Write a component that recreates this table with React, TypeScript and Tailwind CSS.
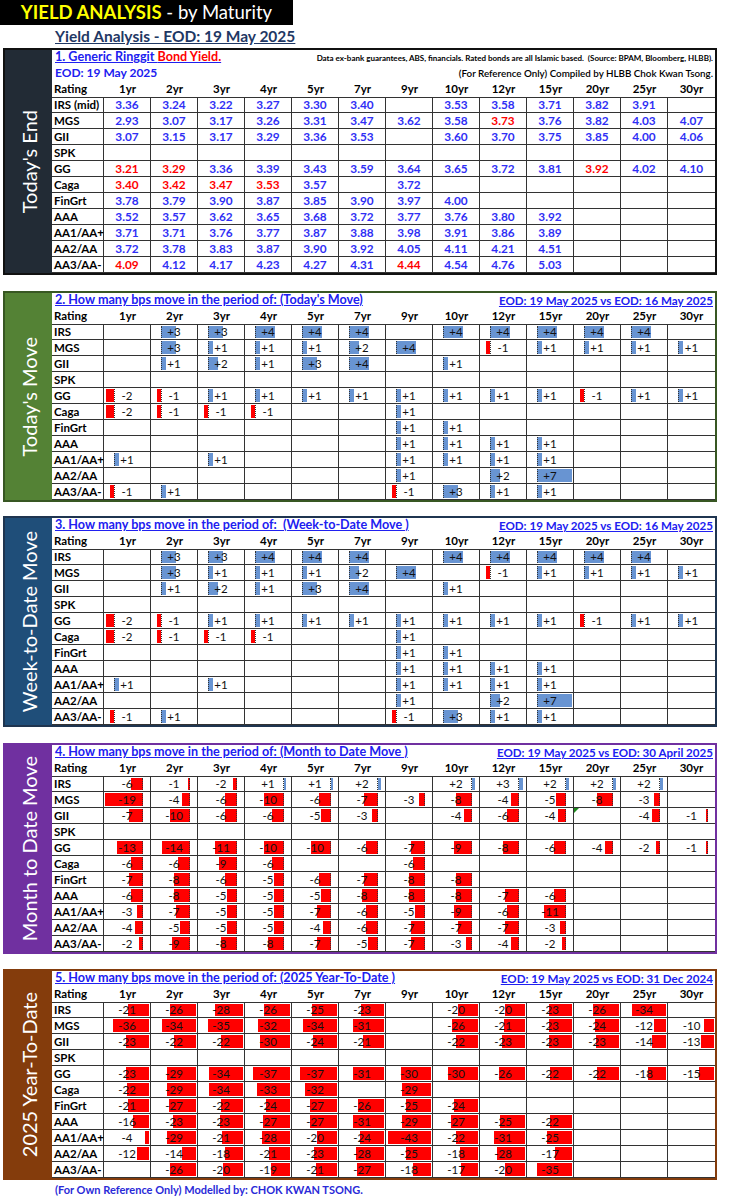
import React from "react";

type Cell = number | null;

const cols = ["1yr", "2yr", "3yr", "4yr", "5yr", "7yr", "9yr", "10yr", "12yr", "15yr", "20yr", "25yr", "30yr"];
const ratings = ["IRS", "MGS", "GII", "SPK", "GG", "Caga", "FinGrt", "AAA", "AA1/AA+", "AA2/AA", "AA3/AA-"];

// "!" in front = red figure
const yields: (string | null)[][] = [
  ["3.36", "3.24", "3.22", "3.27", "3.30", "3.40", null, "3.53", "3.58", "3.71", "3.82", "3.91", null],
  ["2.93", "3.07", "3.17", "3.26", "3.31", "3.47", "3.62", "3.58", "!3.73", "3.76", "3.82", "4.03", "4.07"],
  ["3.07", "3.15", "3.17", "3.29", "3.36", "3.53", null, "3.60", "3.70", "3.75", "3.85", "4.00", "4.06"],
  [],
  ["!3.21", "!3.29", "3.36", "3.39", "3.43", "3.59", "3.64", "3.65", "3.72", "3.81", "!3.92", "4.02", "4.10"],
  ["!3.40", "!3.42", "!3.47", "!3.53", "3.57", null, "3.72"],
  ["3.78", "3.79", "3.90", "3.87", "3.85", "3.90", "3.97", "4.00"],
  ["3.52", "3.57", "3.62", "3.65", "3.68", "3.72", "3.77", "3.76", "3.80", "3.92"],
  ["3.71", "3.71", "3.76", "3.77", "3.87", "3.88", "3.98", "3.91", "3.86", "3.89"],
  ["3.72", "3.78", "3.83", "3.87", "3.90", "3.92", "4.05", "4.11", "4.21", "4.51"],
  ["!4.09", "4.12", "4.17", "4.23", "4.27", "4.31", "!4.44", "4.54", "4.76", "5.03"],
];

const today: Cell[][] = [
  [null, 3, 3, 4, 4, 4, null, 4, 4, 4, 4, 4, null],
  [null, 3, 1, 1, 1, 2, 4, null, -1, 1, 1, 1, 1],
  [null, 1, 2, 1, 3, 4, null, 1],
  [],
  [-2, -1, 1, 1, 1, 1, 1, 1, 1, 1, -1, 1, 1],
  [-2, -1, -1, -1, null, null, 1],
  [null, null, null, null, null, null, 1, 1],
  [null, null, null, null, null, null, 1, 1, 1, 1],
  [1, null, 1, null, null, null, 1, 1, 1, 1],
  [null, null, null, null, null, null, 1, null, 2, 7],
  [-1, 1, null, null, null, null, -1, 3, 1, 1],
];

const mtd: Cell[][] = [
  [-6, -1, -2, 1, 1, 2, null, 2, 3, 2, 2, 2, null],
  [-19, -4, -6, -10, -6, -7, -3, -8, -4, -5, -8, -3, null],
  [-7, -10, -6, -6, -5, -3, null, -4, -6, -4, null, -4, -1],
  [],
  [-13, -14, -11, -10, -10, -6, -7, -9, -8, -6, -4, -2, -1],
  [-6, -6, -9, -6, null, null, -6],
  [-7, -8, -6, -5, -6, -7, -8, -8],
  [-6, -8, -5, -5, -5, -8, -8, -8, -7, -6],
  [-3, -7, -5, -5, -7, -6, -5, -9, -6, -11],
  [-4, -5, -5, -5, -4, -6, -7, -7, -7, -3],
  [-2, -9, -8, -8, -7, -5, -7, -3, -4, -2],
];

const ytd: Cell[][] = [
  [-21, -26, -28, -26, -25, -23, null, -20, -20, -23, -26, -34, null],
  [-36, -34, -35, -32, -34, -31, null, -26, -21, -23, -24, -12, -10],
  [-23, -22, -22, -30, -24, -21, null, -22, -23, -23, -23, -14, -13],
  [],
  [-23, -29, -34, -37, -37, -31, -30, -30, -26, -22, -22, -18, -15],
  [-22, -29, -34, -33, -32, null, -29],
  [-21, -27, -22, -24, -27, -26, -25, -24],
  [-16, -23, -23, -27, -27, -31, -29, -27, -25, -22],
  [-4, -29, -21, -28, -20, -24, -43, -22, -31, -25],
  [-12, -14, -18, -21, -23, -28, -25, -18, -28, -17],
  [null, -26, -20, -19, -21, -27, -18, -17, -20, -35],
];

type Kind = "today" | "mtd" | "ytd";

const fmt = (v: number) => (v > 0 ? `+${v}` : `${v}`);

function MoveBar({ v, kind }: { v: number; kind: Kind }) {
  if (kind === "today") {
    return (
      <>
        {v < 0 ? (
          <div className="absolute top-[1px] bottom-[1px] bg-[#ff0000]" style={{ left: 10 - Math.min(-v * 4, 9), width: Math.min(-v * 4, 9) }} />
        ) : (
          <div className="absolute top-[1px] bottom-[1px] left-[10px] bg-[#6894d2]" style={{ width: Math.min(v * 5, 36) }} />
        )}
        <div className="absolute top-[1px] bottom-[1px] left-[10px] border-l border-dotted border-[#333]" />
      </>
    );
  }
  if (kind === "mtd") {
    return (
      <>
        {v < 0 ? (
          <div className="absolute top-[1px] bottom-[1px] right-[7px] bg-[#ff0000]" style={{ width: Math.min(-v * 2, 38) }} />
        ) : (
          <div className="absolute top-[1px] bottom-[1px] bg-[#6894d2]" style={{ right: 7 - Math.min(v + 1, 5), width: Math.min(v + 1, 5) }} />
        )}
        <div className="absolute top-[1px] bottom-[1px] right-[7px] border-r border-dotted border-[#333]" />
      </>
    );
  }
  return <div className="absolute top-[1px] bottom-[1px] right-[1px] bg-[#ff0000]" style={{ width: Math.min(-v, 44) }} />;
}

function GridRow({ label, children, first }: { label: string; children: React.ReactNode; first?: boolean }) {
  return (
    <div className={`flex h-[16px] border-b border-[#333] ${first ? "border-t" : ""}`}>
      <div className="flex w-[52px] shrink-0 items-center border-r border-[#333] pl-[2px] text-[11.5px] font-bold text-black">
        {label}
      </div>
      {children}
    </div>
  );
}

function ColCell({ i, children }: { i: number; children?: React.ReactNode }) {
  return (
    <div className={`relative flex w-[47px] shrink-0 items-center justify-center ${i < 12 ? "border-r border-[#333]" : ""}`}>
      {children}
    </div>
  );
}

function HeaderRow() {
  return (
    <div className="flex h-[16px] items-center text-[11.5px] font-bold text-black">
      <div className="w-[52px] shrink-0 pl-[2px]">Rating</div>
      {cols.map((c) => (
        <div key={c} className="w-[47px] shrink-0 text-center">
          {c}
        </div>
      ))}
    </div>
  );
}

function Section({
  side,
  sideBg,
  border,
  children,
}: {
  side: string;
  sideBg: string;
  border: string;
  children: React.ReactNode;
}) {
  return (
    <div className={`ml-[3px] flex w-[714px] border-2 ${border}`}>
      <div className={`flex w-[47px] shrink-0 items-center justify-center ${sideBg}`}>
        <span className="rotate-180 text-[20px] leading-none whitespace-nowrap text-white [writing-mode:vertical-rl]">{side}</span>
      </div>
      <div className="flex-1">{children}</div>
    </div>
  );
}

function MoveSection({
  side,
  sideBg,
  border,
  title,
  right,
  data,
  kind,
}: {
  side: string;
  sideBg: string;
  border: string;
  title: string;
  right: string;
  data: Cell[][];
  kind: Kind;
}) {
  return (
    <Section side={side} sideBg={sideBg} border={border}>
      <div className="flex h-[15px] items-center justify-between pr-[2px] pl-[3px] font-bold text-[#2020f0] underline">
        <span className="text-[12.6px] whitespace-pre">{title}</span>
        <span className="text-[11.6px]">{right}</span>
      </div>
      <HeaderRow />
      {ratings.map((r, ri) => (
        <GridRow key={r} label={r} first={ri === 0}>
          {cols.map((c, ci) => {
            const v = data[ri][ci];
            return (
              <ColCell key={c} i={ci}>
                {v != null && <MoveBar v={v} kind={kind} />}
                {v != null && <span className="relative text-[11.5px] text-[#111]">{fmt(v)}</span>}
                {kind === "mtd" && ri === 2 && ci === 10 && (
                  <div className="absolute top-0 left-0 h-0 w-0 border-t-[5px] border-r-[5px] border-t-[#1d8a1d] border-r-transparent" />
                )}
              </ColCell>
            );
          })}
        </GridRow>
      ))}
    </Section>
  );
}

export default function App() {
  return (
    <div className="min-h-[1200px] w-[736px] bg-white font-['Lato','Noto_Sans',sans-serif]">
      <div className="flex h-[25px] w-[293px] items-center justify-center bg-black text-[18.5px] leading-none">
        <span className="font-bold text-[#ffff00]">YIELD ANALYSIS</span>
        <span className="text-white">&nbsp;- by Maturity</span>
      </div>
      <div className="flex h-[23px] items-center pl-[55px] text-[15.5px] font-bold text-[#1f3864] underline">
        Yield Analysis - EOD: 19 May 2025
      </div>

      <Section side="Today's End" sideBg="bg-[#222b35]" border="border-[#111]">
        <div className="flex h-[15px] items-center justify-between pr-[2px] pl-[3px]">
          <span className="text-[12.6px] font-bold text-[#2020f0] underline">
            1. Generic Ringgit <span className="text-[#ff0000]">Bond Yield.</span>
          </span>
          <span className="text-[8px] font-bold text-black">
            Data ex-bank guarantees, ABS, financials. Rated bonds are all Islamic based.&nbsp; (Source: BPAM, Bloomberg, HLBB).
          </span>
        </div>
        <div className="flex h-[16px] items-center justify-between pr-[2px] pl-[3px]">
          <span className="text-[12px] font-bold text-[#2020f0]">EOD: 19 May 2025</span>
          <span className="text-[9.8px] font-semibold text-black">(For Reference Only) Compiled by HLBB Chok Kwan Tsong.</span>
        </div>
        <HeaderRow />
        {ratings.map((r, ri) => (
          <GridRow key={r} label={r === "IRS" ? "IRS (mid)" : r} first={ri === 0}>
            {cols.map((c, ci) => {
              const y = yields[ri][ci];
              const red = y != null && y.startsWith("!");
              return (
                <ColCell key={c} i={ci}>
                  {y != null && (
                    <span className={`text-[11.8px] font-bold ${red ? "text-[#ff0000]" : "text-[#2f2ff5]"}`}>
                      {red ? y.slice(1) : y}
                    </span>
                  )}
                </ColCell>
              );
            })}
          </GridRow>
        ))}
      </Section>

      <div className="mt-[16px]">
        <MoveSection
          side="Today's Move"
          sideBg="bg-[#548235]"
          border="border-[#385723]"
          title="2. How many bps move in the period of: (Today's Move)"
          right="EOD: 19 May 2025 vs EOD: 16 May 2025"
          data={today}
          kind="today"
        />
      </div>
      <div className="mt-[14px]">
        <MoveSection
          side="Week-to-Date Move"
          sideBg="bg-[#1f4e79]"
          border="border-[#1f3550]"
          title="3. How many bps move in the period of:  (Week-to-Date Move )"
          right="EOD: 19 May 2025 vs EOD: 16 May 2025"
          data={today}
          kind="today"
        />
      </div>
      <div className="mt-[16px]">
        <MoveSection
          side="Month to Date Move"
          sideBg="bg-[#7030a0]"
          border="border-[#7030a0]"
          title="4. How many bps move in the period of: (Month to Date Move )"
          right="EOD: 19 May 2025 vs EOD: 30 April 2025"
          data={mtd}
          kind="mtd"
        />
      </div>
      <div className="mt-[15px]">
        <MoveSection
          side="2025 Year-To-Date"
          sideBg="bg-[#843c0c]"
          border="border-[#843c0c]"
          title="5. How many bps move in the period of: (2025 Year-To-Date )"
          right="EOD: 19 May 2025 vs EOD: 31 Dec 2024"
          data={ytd}
          kind="ytd"
        />
      </div>
      <div className="pl-[55px] pt-[2px] text-[11px] font-bold text-[#2a2ad8]">
        (For Own Reference Only) Modelled by: CHOK KWAN TSONG.
      </div>
    </div>
  );
}
